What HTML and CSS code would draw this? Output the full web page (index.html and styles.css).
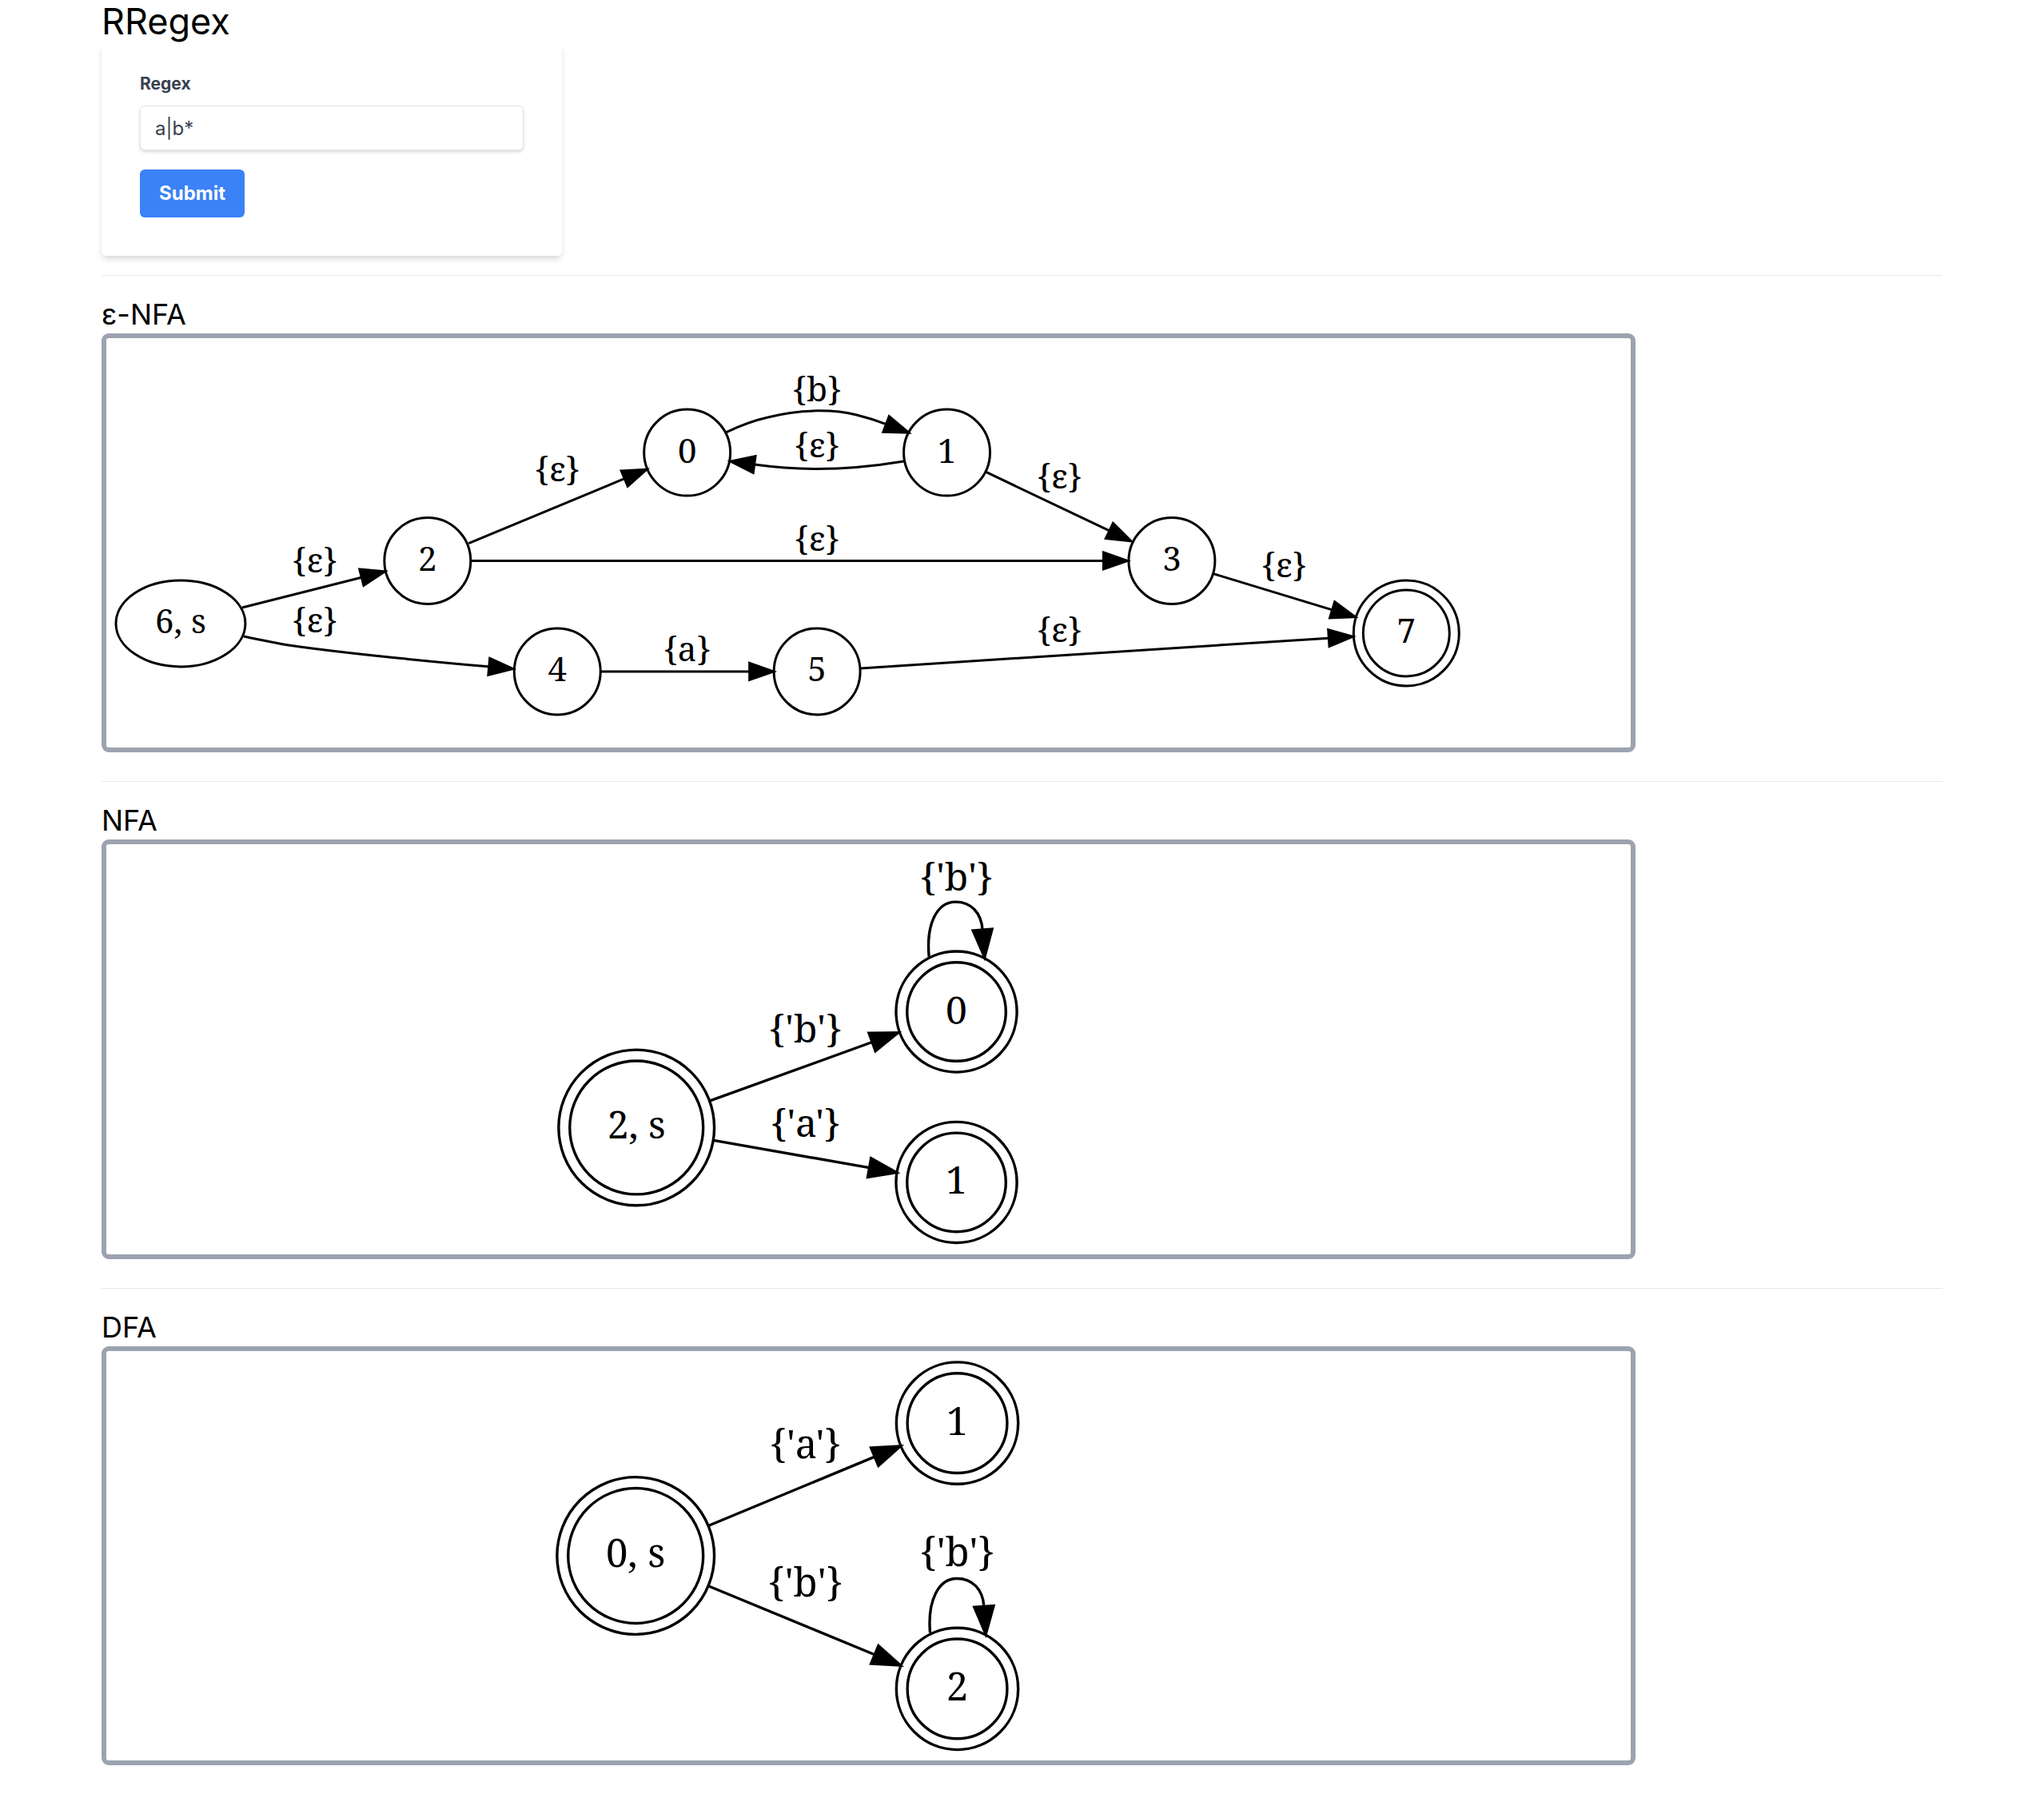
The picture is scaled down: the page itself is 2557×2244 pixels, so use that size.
FILE: index.html
```html
<!DOCTYPE html>
<html lang="en">
<head>
<meta charset="utf-8">
<title>RRegex</title>
<link rel="stylesheet" href="styles.css">
</head>
<body>
<main class="container">
  <h1 class="title">RRegex</h1>
  <form class="card">
    <label class="label" for="regex">Regex</label>
    <input class="input" id="regex" type="text" value="a|b*">
    <button class="button" type="button">Submit</button>
  </form>

  <section class="section">
    <h2 class="heading">ε-NFA</h2>
    <svg class="graph graph-enfa" viewBox="-1 0 1908 512" role="img" aria-label="ε-NFA graph">
      <defs>
        <marker id="arrow-enfa" markerUnits="userSpaceOnUse" markerWidth="60" markerHeight="60" orient="auto" overflow="visible">
          <path class="arrow" d="M0,-10.5 L30,0 L0,10.5 Z"/>
        </marker>
      </defs>
      <g class="nodes">
        <ellipse cx="92" cy="357" rx="81" ry="54"/>
        <circle cx="401" cy="278.5" r="54"/>
        <circle cx="563.5" cy="417" r="54"/>
        <circle cx="726" cy="143" r="54"/>
        <circle cx="888.5" cy="417" r="54"/>
        <circle cx="1051" cy="143" r="54"/>
        <circle cx="1332.5" cy="278.5" r="54"/>
        <circle cx="1626" cy="369" r="54"/>
        <circle cx="1626" cy="369" r="66"/>
      </g>
      <g class="edges" marker-end="url(#arrow-enfa)">
        <path d="M169,337 L318.5,299.3"/>
        <path d="M171,373 C190,377 209,381 227,384 C310,396 400,404 478,411"/>
        <path d="M452.5,256.6 L647.5,175.6"/>
        <path d="M455,278.5 H1247"/>
        <path d="M618,417 H804"/>
        <path d="M774,118 C791,110 809,103 827,99 C868,88 912,89 938,96 C950,99 963,103 975,107.5"/>
        <path d="M997,154 C961,160 925,163.5 888,163.5 C862,163.5 836,161.5 810,158"/>
        <path d="M1100,167.4 L1254.4,240.9"/>
        <path d="M1384.4,294.6 L1533.3,339.9"/>
        <path d="M943.4,413 L1529,375.2"/>
      </g>
      <g class="labels">
        <text x="92" y="369">6, s</text>
        <text x="401" y="291">2</text>
        <text x="563.5" y="429">4</text>
        <text x="726" y="156">0</text>
        <text x="888.5" y="429">5</text>
        <text x="1051" y="156">1</text>
        <text x="1332.5" y="291">3</text>
        <text x="1626" y="381">7</text>
        <text x="260" y="293">{ε}</text>
        <text x="260" y="368">{ε}</text>
        <text x="563.5" y="179">{ε}</text>
        <text x="888.5" y="79">{b}</text>
        <text x="888.5" y="149">{ε}</text>
        <text x="888.5" y="266">{ε}</text>
        <text x="726" y="404">{a}</text>
        <text x="1192" y="188">{ε}</text>
        <text x="1192" y="380">{ε}</text>
        <text x="1473" y="299">{ε}</text>
      </g>
    </svg>
  </section>

  <section class="section">
    <h2 class="heading">NFA</h2>
    <svg class="graph graph-nfa" viewBox="-1 0 1908 512" role="img" aria-label="NFA graph">
      <defs>
        <marker id="arrow-nfa" markerUnits="userSpaceOnUse" markerWidth="60" markerHeight="60" orient="auto" overflow="visible">
          <path class="arrow" d="M0,-12 L34.4,0 L0,12 Z"/>
        </marker>
      </defs>
      <g class="nodes">
        <circle cx="662.5" cy="354" r="83.5"/>
        <circle cx="662.5" cy="354" r="97.4"/>
        <circle cx="1063" cy="209" r="61.8"/>
        <circle cx="1063" cy="209" r="75.6"/>
        <circle cx="1063" cy="422.5" r="61.8"/>
        <circle cx="1063" cy="422.5" r="75.6"/>
      </g>
      <g class="edges" marker-end="url(#arrow-nfa)">
        <path d="M754.5,320.5 L957.5,247"/>
        <path d="M759,370 L954,404.2"/>
        <path d="M1028.6,140 C1025,100 1038,71.5 1062,71.5 C1081,71.5 1094,85 1095.6,106.5"/>
      </g>
      <g class="labels">
        <text x="662.5" y="368">2, s</text>
        <text x="1063" y="224">0</text>
        <text x="1063" y="437">1</text>
        <text x="1063" y="57">{'b'}</text>
        <text x="874" y="247">{'b'}</text>
        <text x="874" y="366">{'a'}</text>
      </g>
    </svg>
  </section>

  <section class="section">
    <h2 class="heading">DFA</h2>
    <svg class="graph graph-dfa" viewBox="-1 0 1908 512" role="img" aria-label="DFA graph">
      <defs>
        <marker id="arrow-dfa" markerUnits="userSpaceOnUse" markerWidth="60" markerHeight="60" orient="auto" overflow="visible">
          <path class="arrow" d="M0,-12.1 L34.7,0 L0,12.1 Z"/>
        </marker>
      </defs>
      <g class="nodes">
        <circle cx="661.5" cy="256" r="84.5"/>
        <circle cx="661.5" cy="256" r="98.4"/>
        <circle cx="1064" cy="90" r="62.4"/>
        <circle cx="1064" cy="90" r="76.2"/>
        <circle cx="1064" cy="422.5" r="62.4"/>
        <circle cx="1064" cy="422.5" r="76.2"/>
      </g>
      <g class="edges" marker-end="url(#arrow-dfa)">
        <path d="M753,218.2 L960.7,132.1"/>
        <path d="M753,294 L960.7,379.8"/>
        <path d="M1030,352.5 C1026.5,313 1040,284.5 1063.5,284.5 C1083,284.5 1096,298 1097.4,319.5"/>
      </g>
      <g class="labels">
        <text x="661.5" y="270">0, s</text>
        <text x="1064" y="105">1</text>
        <text x="1064" y="437">2</text>
        <text x="1064" y="269">{'b'}</text>
        <text x="874" y="134">{'a'}</text>
        <text x="874" y="307">{'b'}</text>
      </g>
    </svg>
  </section>
</main>
</body>
</html>
```

FILE: styles.css
```css
*,
*::before,
*::after {
  box-sizing: border-box;
}

body {
  margin: 0;
  background: #fff;
  color: #000;
  font-family: Inter, "Liberation Sans", sans-serif;
  font-size: 24px;
  line-height: 36px;
}

.container {
  padding: 0 127px;
}

.title,
.heading {
  margin: 0;
  font-weight: 400;
}

.title {
  font-size: 45px;
  line-height: 54px;
}

.heading {
  font-size: 36px;
  line-height: 48px;
}

.card {
  width: 25%;
  min-width: 320px;
  margin-bottom: 24px;
  padding: 36px 48px 48px;
  border-radius: 6px;
  box-shadow: 0 6px 9px -1px rgba(0, 0, 0, 0.1), 0 3px 6px -1px rgba(0, 0, 0, 0.06);
}

.label {
  display: block;
  margin-bottom: 12px;
  color: #374151;
  font-size: 21px;
  font-weight: 700;
  line-height: 30px;
}

.input {
  display: block;
  width: 100%;
  height: 56px;
  margin-bottom: 24px;
  padding: 12px 18px;
  border: 1px solid #e5e7eb;
  border-radius: 6px;
  background: #fff;
  box-shadow: 0 2px 5px rgba(0, 0, 0, 0.1), 0 2px 3px rgba(0, 0, 0, 0.06);
  color: #374151;
  font: inherit;
  line-height: 30px;
}

.button {
  display: block;
  padding: 12px 24px;
  border: 0;
  border-radius: 6px;
  background: #3b82f6;
  color: #fff;
  font: inherit;
  font-weight: 700;
  cursor: pointer;
}

.section {
  margin-bottom: 36px;
  padding-top: 24px;
  border-top: 1px solid #e5e7eb;
}

.graph {
  display: block;
  width: 83.3333%;
  height: 524px;
  border: 6px solid #9ca3af;
  border-radius: 9px;
}

.nodes,
.edges {
  fill: none;
  stroke: #000;
}

.arrow {
  fill: #000;
  stroke: #000;
}

.graph-enfa {
  stroke-width: 3px;
  font-size: 42px;
}

.graph-nfa {
  height: 525px;
  stroke-width: 3.4px;
  font-size: 48px;
}

.graph-dfa {
  stroke-width: 3.4px;
  font-size: 49px;
}

.labels {
  fill: #000;
  font-family: "Noto Serif", "Droid Serif", "Liberation Serif", serif;
  text-anchor: middle;
}
```
